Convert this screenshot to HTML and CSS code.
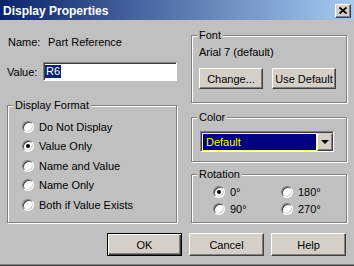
FILE: index.html
```html
<!DOCTYPE html>
<html lang="en">
<head>
    <meta charset="UTF-8">
    <title>Display Properties</title>
    <link rel="stylesheet" href="styles.css">
</head>
<body>
    <div class="window">
        <div class="titlebar">
            <span class="title">Display Properties</span>
            <button class="close-btn" aria-label="Close">
                <svg width="8" height="7" viewBox="0 0 8 7"><path d="M0.5 0.5L7.5 6.5M7.5 0.5L0.5 6.5" stroke="#000" stroke-width="1.8"/></svg>
            </button>
        </div>

        <div class="columns">
            <div class="col-left">
                <div class="name-row">
                    <span class="name-label">Name:</span>
                    <span>Part Reference</span>
                </div>
                <div class="value-row">
                    <span class="value-label">Value:</span>
                    <div class="textbox"><span class="selection">R6</span></div>
                </div>

                <div class="group group-format">
                    <div class="legend">Display Format</div>
                    <div class="radio-list">
                        <div class="radio-row"><span class="radio"></span>Do Not Display</div>
                        <div class="radio-row"><span class="radio checked"></span>Value Only</div>
                        <div class="radio-row"><span class="radio"></span>Name and Value</div>
                        <div class="radio-row"><span class="radio"></span>Name Only</div>
                        <div class="radio-row"><span class="radio"></span>Both if Value Exists</div>
                    </div>
                </div>
            </div>

            <div class="col-right">
                <div class="group group-font">
                    <div class="legend">Font</div>
                    <div class="font-name">Arial 7 (default)</div>
                    <div class="font-buttons">
                        <button class="btn btn-small">Change...</button>
                        <button class="btn btn-small">Use Default</button>
                    </div>
                </div>

                <div class="group group-color">
                    <div class="legend">Color</div>
                    <div class="combo">
                        <div class="combo-field">Default</div>
                        <div class="combo-btn"><span class="arrow"></span></div>
                    </div>
                </div>

                <div class="group group-rotation">
                    <div class="legend">Rotation</div>
                    <div class="rotation-grid">
                        <div class="radio-row"><span class="radio checked"></span>0°</div>
                        <div class="radio-row"><span class="radio"></span>180°</div>
                        <div class="radio-row"><span class="radio"></span>90°</div>
                        <div class="radio-row"><span class="radio"></span>270°</div>
                    </div>
                </div>
            </div>
        </div>

        <div class="footer">
            <button class="btn btn-wide btn-default">OK</button>
            <button class="btn btn-wide">Cancel</button>
            <button class="btn btn-wide">Help</button>
        </div>
    </div>
</body>
</html>
```

FILE: styles.css
```css
:root {
    --face: #c0c0c0;
    --btn-face: #d4d0c8;
    --shadow: #808080;
    --dark: #404040;
    --hilite: #ffffff;
    --navy: #0a246a;
}

body {
    margin: 0;
    font-family: 'Liberation Sans', Arial, sans-serif;
    font-size: 11px;
    color: #000;
}

.window {
    width: 354px;
    height: 266px;
    box-sizing: border-box;
    background-color: var(--face);
    border-bottom: 1px solid var(--dark);
    box-shadow: inset 0 -1px var(--shadow);
}

/* title bar */
.titlebar {
    height: 20px;
    display: flex;
    align-items: center;
    justify-content: space-between;
    padding: 1px 3px 0 3px;
    box-sizing: border-box;
    background: linear-gradient(90deg, #0a246a, #a6caf0);
}

.title {
    color: #fff;
    font-weight: bold;
    font-size: 12px;
}

.close-btn {
    width: 16px;
    height: 14px;
    padding: 0;
    box-sizing: border-box;
    display: flex;
    align-items: center;
    justify-content: center;
    background-color: var(--btn-face);
    border: 1px solid;
    border-color: var(--hilite) var(--dark) var(--dark) var(--hilite);
    box-shadow: inset -1px -1px var(--shadow);
}

/* layout */
.columns {
    display: flex;
    gap: 14px;
    padding: 15px 0 0 7px;
}

.col-left {
    width: 170px;
}

.col-right {
    width: 156px;
}

.name-row {
    display: flex;
    margin-top: 1px;
    line-height: 13px;
}

.name-label {
    width: 40px;
    padding-left: 1px;
}

.value-row {
    display: flex;
    align-items: center;
    margin-top: 13px;
}

.value-label {
    width: 36px;
}

.textbox {
    width: 134px;
    height: 19px;
    box-sizing: border-box;
    display: flex;
    align-items: center;
    padding-left: 1px;
    background-color: #fff;
    border: 1px solid;
    border-color: var(--shadow) var(--hilite) var(--hilite) var(--shadow);
    box-shadow: inset 1px 1px var(--dark);
}

.selection {
    background-color: var(--navy);
    color: #fff;
    padding: 0 1px;
    line-height: 13px;
}

/* group boxes */
.group {
    box-sizing: border-box;
    border: 1px solid var(--shadow);
    box-shadow: inset 1px 1px var(--hilite), 1px 1px var(--hilite);
}

.legend {
    width: fit-content;
    margin: -7px 0 0 5px;
    padding: 0 2px;
    line-height: 13px;
    background-color: var(--face);
}

.group-format {
    height: 118px;
    margin-top: 24px;
}

.radio-list {
    padding: 5px 0 0 14px;
}

.radio-list .radio-row {
    height: 19.5px;
}

.radio-row {
    display: flex;
    align-items: center;
    gap: 5px;
}

.radio {
    width: 12px;
    height: 12px;
    box-sizing: border-box;
    border-radius: 50%;
    display: inline-flex;
    align-items: center;
    justify-content: center;
    background-color: #fff;
    border: 1px solid;
    border-color: var(--shadow) var(--hilite) var(--hilite) var(--shadow);
    box-shadow: inset 1px 1px var(--dark), inset -1px -1px var(--btn-face);
}

.radio.checked::after {
    content: "";
    width: 4px;
    height: 4px;
    border-radius: 50%;
    background-color: #000;
}

.group-font {
    height: 68px;
    padding: 0 7px;
}

.group-font .legend {
    margin-left: -2px;
}

.font-name {
    margin-top: 4px;
    line-height: 13px;
}

.font-buttons {
    display: flex;
    gap: 9px;
    margin-top: 9px;
}

.btn {
    font: inherit;
    color: #000;
    padding: 0;
    box-sizing: border-box;
    background-color: var(--btn-face);
    border: 1px solid;
    border-color: var(--hilite) var(--dark) var(--dark) var(--hilite);
    box-shadow: inset -1px -1px var(--shadow);
}

.btn-small {
    width: 64px;
    height: 21px;
}

.group-color {
    height: 45px;
    margin-top: 14px;
}

.combo {
    width: 134px;
    height: 21px;
    margin: 7px 0 0 8px;
    box-sizing: border-box;
    display: flex;
    padding: 1px 0 0 1px;
    border: 1px solid;
    border-color: var(--shadow) var(--hilite) var(--hilite) var(--shadow);
    box-shadow: inset 1px 1px var(--dark);
}

.combo-field {
    flex: 1;
    display: flex;
    align-items: center;
    padding-left: 3px;
    background-color: #000080;
    color: #ffff00;
    border: 1px solid #ffff80;
}

.combo-btn {
    width: 16px;
    box-sizing: border-box;
    display: flex;
    align-items: center;
    justify-content: center;
    background-color: var(--btn-face);
    border: 1px solid;
    border-color: var(--btn-face) var(--dark) var(--dark) var(--hilite);
    box-shadow: inset -1px -1px var(--shadow);
}

.arrow {
    width: 0;
    height: 0;
    border-left: 4px solid transparent;
    border-right: 4px solid transparent;
    border-top: 4px solid #000;
}

.group-rotation {
    height: 49px;
    margin-top: 12px;
}

.rotation-grid {
    display: grid;
    grid-template-columns: 68px auto;
    grid-auto-rows: 17px;
    padding: 2px 0 0 21px;
}

/* dialog buttons */
.footer {
    display: flex;
    justify-content: flex-end;
    gap: 7px;
    padding: 10px 8px 0 0;
}

.btn-wide {
    width: 75px;
    height: 23px;
}

.btn-default {
    border-color: #000;
    box-shadow: inset 1px 1px var(--hilite), inset -1px -1px var(--dark), inset -2px -2px var(--shadow);
}
```
